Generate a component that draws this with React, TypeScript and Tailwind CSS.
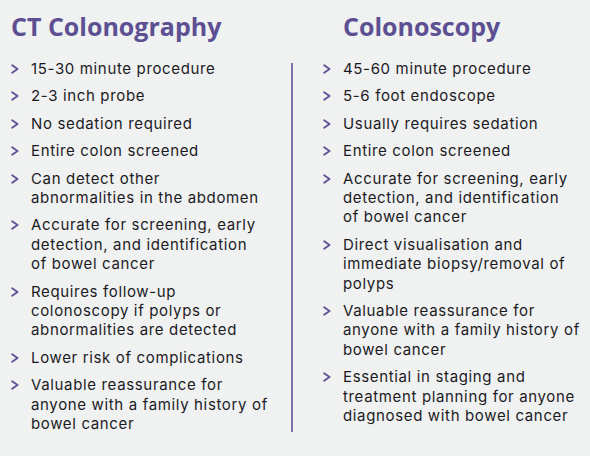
const ctItems: string[][] = [
  ["15-30 minute procedure"],
  ["2-3 inch probe"],
  ["No sedation required"],
  ["Entire colon screened"],
  ["Can detect other", "abnormalities in the abdomen"],
  ["Accurate for screening, early", "detection, and identification", "of bowel cancer"],
  ["Requires follow-up", "colonoscopy if polyps or", "abnormalities are detected"],
  ["Lower risk of complications"],
  ["Valuable reassurance for", "anyone with a family history of", "bowel cancer"],
];

const colonoscopyItems: string[][] = [
  ["45-60 minute procedure"],
  ["5-6 foot endoscope"],
  ["Usually requires sedation"],
  ["Entire colon screened"],
  ["Accurate for screening, early", "detection, and identification", "of bowel cancer"],
  ["Direct visualisation and", "immediate biopsy/removal of", "polyps"],
  ["Valuable reassurance for", "anyone with a family history of", "bowel cancer"],
  ["Essential in staging and", "treatment planning for anyone", "diagnosed with bowel cancer"],
];

function Chevron() {
  return (
    <svg
      width="8"
      height="10"
      viewBox="0 0 8 10"
      className="mt-[5px] shrink-0"
      fill="none"
    >
      <path
        d="M1.2 1.2 L6.5 5 L1.2 8.8"
        stroke="#5e5596"
        strokeWidth="1.9"
        strokeLinecap="round"
        strokeLinejoin="round"
      />
    </svg>
  );
}

function Column({
  title,
  items,
  indentTitle,
}: {
  title: string;
  items: string[][];
  indentTitle?: boolean;
}) {
  return (
    <div className="flex flex-col">
      <h2
        className={`font-['Open_Sans',sans-serif] text-[25px] font-bold leading-[32px] text-[#5c5093] ${
          indentTitle ? "pl-[20px]" : ""
        }`}
      >
        {title}
      </h2>
      <ul className="mt-[17px] flex flex-col gap-[8px]">
        {items.map((lines, i) => (
          <li key={i} className="flex gap-[12px]">
            <Chevron />
            <span className="text-[15px] leading-[19.4px] tracking-[0.65px] text-[#1b1b1f]">
              {lines.map((line, j) => (
                <span key={j} className="block">
                  {line}
                </span>
              ))}
            </span>
          </li>
        ))}
      </ul>
    </div>
  );
}

export default function App() {
  return (
    <div className="h-[456px] w-[590px] bg-[#f0f1f1] font-['Inter',sans-serif]">
      <div className="flex pt-[10px]">
        <div className="w-[291px] pl-[11px]">
          <Column title="CT Colonography" items={ctItems} />
        </div>
        <div className="mt-[53px] h-[369px] w-[2px] bg-[#7b72a8]" />
        <div className="pl-[30px]">
          <Column title="Colonoscopy" items={colonoscopyItems} indentTitle />
        </div>
      </div>
    </div>
  );
}
